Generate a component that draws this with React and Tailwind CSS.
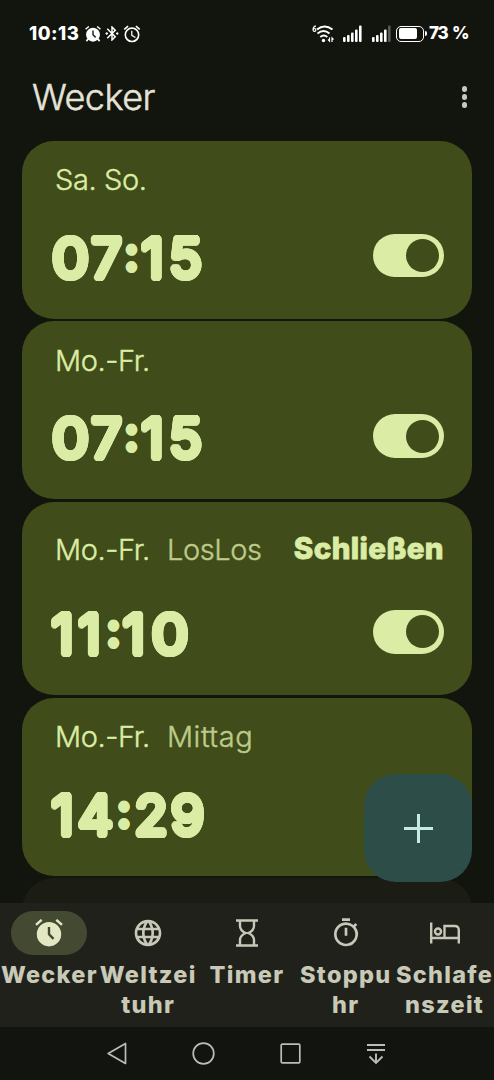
import React, { useState } from 'react';
import { MdBluetoothConnected, MdLanguage, MdOutlineAlarm, MdOutlineTimer } from 'react-icons/md';

// cells: width of every character in the rounded clock face
const alarms = [
    { id: 1, days: 'Sa. So.', time: '07:15', cells: ['w-[37px]', 'w-[35px]', 'w-[15px]', 'w-[27px]', 'w-[39px]'] },
    { id: 2, days: 'Mo.-Fr.', time: '07:15', cells: ['w-[37px]', 'w-[35px]', 'w-[15px]', 'w-[27px]', 'w-[39px]'] },
    {
        id: 3,
        days: 'Mo.-Fr.',
        label: 'LosLos',
        time: '11:10',
        dismissable: true,
        cells: ['w-[21px]', 'w-[33px]', 'w-[15px]', 'w-[26px]', 'w-[46px]'],
    },
    {
        id: 4,
        days: 'Mo.-Fr.',
        label: 'Mittag',
        time: '14:29',
        cells: ['w-[21px]', 'w-[45px]', 'w-[12px]', 'w-[42px]', 'w-[31px]'],
    },
];

// Ring of hard shadows that thickens glyphs and rounds their corners
const ring = (radius) =>
    Array.from({ length: 16 }, (_, i) => {
        const angle = (i * Math.PI) / 8;
        return `${(Math.cos(angle) * radius).toFixed(2)}px ${(Math.sin(angle) * radius).toFixed(2)}px 0 currentColor`;
    }).join(', ');

const FilledAlarm = ({ className, feet }) => (
    <svg viewBox="0 0 28 28" className={className} fill="currentColor">
        <path
            fillRule="evenodd"
            d="M14 3a12.2 12.2 0 1 0 0 24.4A12.2 12.2 0 0 0 14 3Zm-1.2 5h2.4v6.8l4.2 4.2-1.7 1.8-4.9-5Z"
        />
        <path d="M1 5.8 6.7.8M27 5.8 21.3.8" stroke="currentColor" strokeWidth="2.4" />
        {feet && <path d="M6 22 2.5 26.5M22 22l3.5 4.5" stroke="currentColor" strokeWidth="3" />}
    </svg>
);

const Hourglass = ({ className }) => (
    <svg viewBox="0 0 24 28" className={className} fill="none" stroke="currentColor" strokeWidth="2.4">
        <path d="M1 1.5h22M1 26.5h22" />
        <path d="M5 1.5V7c0 3.500 2.500 5.500 5.500 7C7.500 15.500 5 17.500 5 21v5.500M19 1.500V7c0 3.500-2.500 5.500-5.500 7 3 1.500 5.500 3.500 5.500 7v5.500" />
        <path d="M9.500 13.500q2.500 1.200 5 0M9.500 14.500q2.500-1.200 5 0" strokeWidth="1.500" />
    </svg>
);

const Bed = ({ className }) => (
    <svg viewBox="0 0 30 22" className={className} fill="none" stroke="currentColor" strokeWidth="2.400">
        <path d="M1.200.500v21M1.200 16h27.600M28.800 21.500V8q0-4-4-4H14.500v12" />
        <circle cx="8" cy="9.500" r="3" />
    </svg>
);

const SignalBars = ({ weak }) => (
    <svg viewBox="0 0 19 17" className="h-[17px] w-[19px]" fill="currentColor">
        <rect x="0" y="12" width="2.600" height="5" rx="1" />
        <rect x="4" y="10" width="2.600" height="7" rx="1" />
        <rect x="8" y="7.500" width="2.600" height="9.500" rx="1" />
        <rect x="12" y="4.500" width="2.600" height="12.500" rx="1" />
        <rect x="16" y="0.500" width="2.600" height="16.500" rx="1" opacity={weak ? 0.3 : 1} />
    </svg>
);

const Wifi = () => (
    <svg viewBox="0 0 22 18" className="h-[18px] w-[22px]" fill="none" stroke="currentColor" strokeWidth="2">
        <path d="M5 4.500q7.500-6 15.500 0M5.500 8.500q6-5 12 0M8.300 12q3.500-3 7 0" />
        <circle cx="11.500" cy="15.500" r="1.700" fill="currentColor" stroke="none" />
        <path d="M17.500 12.500v3.500l-1.500-1.500M20 17v-4l1.500 1.500" strokeWidth="1.200" />
        <path d="M3.800.8Q1.200 1.500 1 4.600" strokeWidth="1.200" />
        <circle cx="2.500" cy="4.900" r="1.400" strokeWidth="1.200" />
    </svg>
);

const StatusBar = () => (
    <div className="flex h-[67px] items-center justify-between pl-[29px] pr-[26px] text-white">
        <div className="flex items-center">
            <span className="w-[56px] whitespace-nowrap font-[Inter] text-[18.500px] font-extrabold tracking-[0.500px]">10:13</span>
            <FilledAlarm className="h-[16px] w-[16px]" feet />
            <MdBluetoothConnected className="ml-[2px] h-[19px] w-[18px]" />
            <MdOutlineAlarm className="ml-px h-[20px] w-[20px]" />
        </div>
        <div className="flex items-center">
            <Wifi />
            <div className="ml-[9px]">
                <SignalBars />
            </div>
            <div className="ml-[10px]">
                <SignalBars weak />
            </div>
            <div className="ml-[5px] flex items-center">
                <div className="h-[16px] w-[28px] rounded-[5px] border-[1.500px] border-white p-[1.500px]">
                    <div className="h-full w-[18px] rounded-[2px] bg-white" />
                </div>
                <div className="ml-px h-[5px] w-[2px] rounded-r bg-white" />
            </div>
            <span className="ml-[2px] w-[39px] whitespace-nowrap font-[Inter] text-[17px] font-extrabold tracking-[-1.200px] [word-spacing:2px]">73 %</span>
        </div>
    </div>
);

const Header = () => (
    <header className="flex h-[60px] items-center justify-between pl-[32px] pr-[27px]">
        <h1 className="font-[Inter] text-[36px] font-light leading-none tracking-[-0.500px] text-[#e5e3d7] [-webkit-text-stroke:0.500px_currentColor]">
            Wecker
        </h1>
        <button className="flex flex-col items-center gap-[2.500px]" aria-label="Mehr">
            <span className="h-[5.500px] w-[5.500px] rounded-full bg-[#c8c9bc]" />
            <span className="h-[5.500px] w-[5.500px] rounded-full bg-[#c8c9bc]" />
            <span className="h-[5.500px] w-[5.500px] rounded-full bg-[#c8c9bc]" />
        </button>
    </header>
);

const Toggle = ({ checked, onChange }) => (
    <button
        role="switch"
        aria-checked={checked}
        onClick={onChange}
        className={`flex h-[43.500px] w-[71px] items-center rounded-full bg-[#dbeca5] px-[5px] ${
            checked ? 'justify-end' : 'justify-start'
        }`}
    >
        <span className="h-[33px] w-[33px] rounded-full bg-[#404c1a]" />
    </button>
);

// The colon is smaller and raised, the zero is a little wider
const charStyle = (char) => {
    if (char === ':') return '-translate-y-2 text-[44px]';
    if (char === '0') return 'scale-x-[1.08]';
    return '';
};

const AlarmCard = ({ alarm }) => {
    const [enabled, setEnabled] = useState(true);

    return (
        <div
            className={`flex shrink-0 flex-col justify-between rounded-[32px] bg-[#404c1a] pl-[30px] pr-[28px] text-[#dbeca5] ${
                alarm.dismissable ? 'h-[193px] pt-[28px]' : 'h-[178px] pt-[20px]'
            }`}
        >
            <div className="flex h-[38px] items-center justify-between whitespace-nowrap pl-[3px]">
                <div className="flex gap-[17px] font-[Inter] text-[29px] font-light leading-none tracking-[-0.400px] [-webkit-text-stroke:0.400px_currentColor]">
                    <span className={alarm.label ? 'w-[95px]' : ''}>{alarm.days}</span>
                    {alarm.label && (
                        <span className={`text-[#bccb89] ${alarm.label === 'Mittag' ? 'tracking-[0.500px]' : ''}`}>
                            {alarm.label}
                        </span>
                    )}
                </div>
                {alarm.dismissable && (
                    <button className="font-[Inter] text-[29.500px] font-extrabold leading-none tracking-[0.400px] [-webkit-text-stroke:0.800px_currentColor]">
                        Schließen
                    </button>
                )}
            </div>
            <div className="flex h-[85px] items-start justify-between">
                <div
                    className="flex h-[50px] items-baseline font-[Inter] text-[54.500px] leading-[49px]"
                    style={{ textShadow: ring(2.9) }}
                >
                    {alarm.time.split('').map((char, i) => (
                        <span key={i} className={`flex justify-center ${alarm.cells[i]} ${charStyle(char)}`}>
                            {char}
                        </span>
                    ))}
                </div>
                <Toggle checked={enabled} onChange={() => setEnabled(!enabled)} />
            </div>
        </div>
    );
};

const tabs = [
    { lines: ['Wecker'], icon: <FilledAlarm className="h-[28px] w-[28px]" />, active: true },
    { lines: ['Weltzei', 'tuhr'], icon: <MdLanguage className="h-[32px] w-[32px]" /> },
    { lines: ['Timer'], icon: <Hourglass className="h-[28px] w-[24px]" /> },
    { lines: ['Stoppu', 'hr'], icon: <MdOutlineTimer className="h-[32px] w-[32px]" /> },
    { lines: ['Schlafe', 'nszeit'], icon: <Bed className="h-[22px] w-[30px]" /> },
];

const TabBar = () => (
    <nav className="grid h-[124px] grid-cols-5 bg-[#20211b] pt-2">
        {tabs.map((tab) => (
            <div
                key={tab.lines[0]}
                className={`flex flex-col items-center ${tab.active ? 'text-[#e3e8c3]' : 'text-[#c8c8b9]'}`}
            >
                <div className={`flex h-[44px] w-[76px] items-center justify-center rounded-full ${tab.active ? 'bg-[#444932]' : ''}`}>
                    {tab.icon}
                </div>
                <div className="mt-[5px] whitespace-nowrap text-center font-[Inter] text-[23.500px] font-extrabold leading-[30px] tracking-[1.300px] text-[#c8c9b6]">
                    {tab.lines.map((line) => (
                        <div key={line}>{line}</div>
                    ))}
                </div>
            </div>
        ))}
    </nav>
);

const SystemBar = () => (
    <div className="flex h-[53px] items-center gap-[65px] bg-[#12140f] pl-[107px] text-[#bcbcb8]">
        <svg viewBox="0 0 20 23" className="h-[23px] w-[20px]" fill="none" stroke="currentColor" strokeWidth="1.700" strokeLinejoin="round">
            <path d="M18.500 1.500v20L1.200 11.500Z" />
        </svg>
        <svg viewBox="0 0 23 23" className="h-[23px] w-[23px]" fill="none" stroke="currentColor" strokeWidth="1.700">
            <circle cx="11.500" cy="11.500" r="10.300" />
        </svg>
        <svg viewBox="0 0 21 21" className="h-[21px] w-[21px]" fill="none" stroke="currentColor" strokeWidth="1.700">
            <rect x="1.200" y="1.200" width="18.600" height="18.600" rx="1" />
        </svg>
        <svg viewBox="0 0 20 22" className="h-[22px] w-[20px]" fill="none" stroke="currentColor" strokeWidth="1.900">
            <path d="M1 2h18M1 7h18M10 10.500v9.500M3.500 13.500l6.500 6.500 6.500-6.500" />
        </svg>
    </div>
);

export default function App() {
    return (
        <div className="flex h-[1080px] w-[494px] flex-col overflow-hidden bg-[#12140e]">
            <StatusBar />
            <Header />
            <main className="relative min-h-0 flex-1">
                <div className="flex h-full flex-col gap-[2.700px] overflow-hidden px-[22px] pt-[13.700px]">
                    {alarms.map((alarm) => (
                        <AlarmCard key={alarm.id} alarm={alarm} />
                    ))}
                    <div className="h-[178px] shrink-0 rounded-[32px] bg-[#1b1c14]" />
                </div>
                <button
                    aria-label="Wecker hinzufügen"
                    className="absolute bottom-[21px] right-[22px] flex h-[108px] w-[108px] items-center justify-center rounded-[32px] bg-[#2c4d48] text-[#c5ebe2]"
                >
                    <svg viewBox="0 0 29 29" className="h-[29px] w-[29px]" stroke="currentColor" strokeWidth="3">
                        <path d="M14.500 0v29M0 14.500h29" />
                    </svg>
                </button>
            </main>
            <TabBar />
            <SystemBar />
        </div>
    );
}
